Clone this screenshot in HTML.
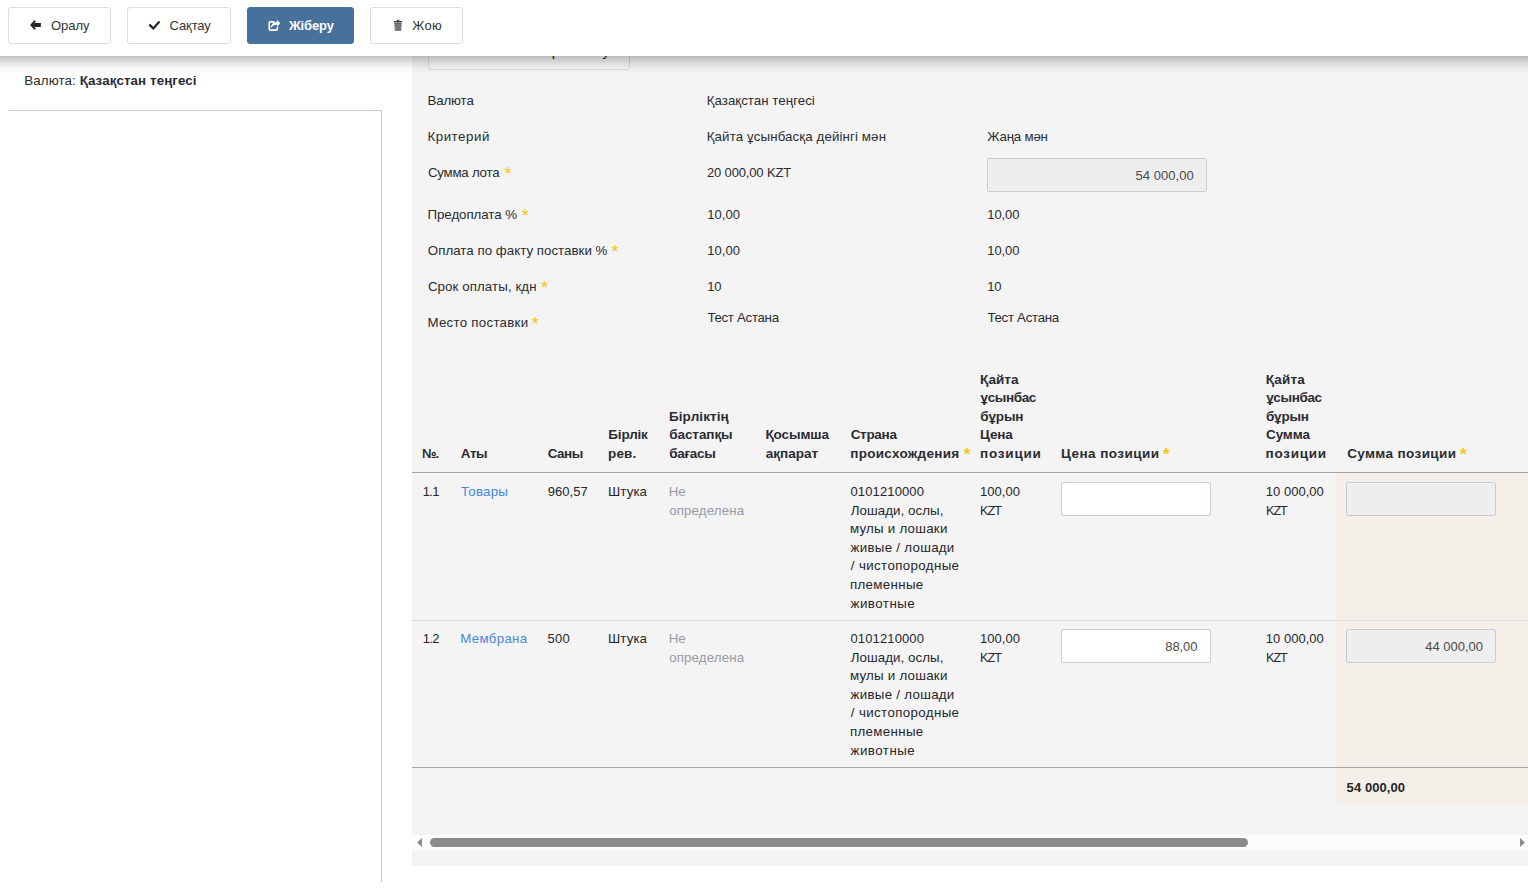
<!DOCTYPE html>
<html lang="kk">
<head>
<meta charset="utf-8">
<title>Қайта ұсынбас</title>
<style>
*{box-sizing:border-box;margin:0;padding:0}
html,body{width:1528px;height:895px;overflow:hidden;background:#fff}
body{font-family:"Liberation Sans","DejaVu Sans",sans-serif;font-size:13px;color:#2a2b33;position:relative}
.abs{position:absolute}
#panel{left:412px;top:0;width:1116px;height:866px;background:#f4f4f4}
#topbar{left:-40px;top:0;width:1608px;height:56px;background:#fff;box-shadow:0 4px 13px rgba(0,0,0,.33);z-index:10}
.btn{position:absolute;top:7px;height:37px;border:1px solid #dadce2;border-radius:3px;background:#fff;font-size:13px;line-height:35px;color:#333;white-space:nowrap}
.btn span{position:absolute;top:0}
.btn.primary{background:#47709b;border-color:#47709b;color:#fff;font-weight:bold}
.lbl,.th,.td{transform-origin:0 50%}
.lbl{position:absolute;white-space:nowrap;line-height:18px;font-size:13.3px}
.th{position:absolute;font-weight:bold;line-height:18.6px;white-space:nowrap;font-size:13.5px}
.td{position:absolute;line-height:18.6px;white-space:nowrap;color:#25262c;font-size:13.3px}
.b,.lbl b{font-weight:bold}
.a{color:#4a86e0}
.muted{color:#979aa5}
.inpt{color:#4a4a4a}
.star{position:absolute;color:#f9c50f;font-size:18px;line-height:18px}
.sb2{font-weight:bold;font-size:17px;margin-left:.5px}
.inp{position:absolute;border:1px solid #c8ccd8;border-radius:2px;background:#fff}
.inp.dis{background:#eee}
.line{position:absolute;left:412px;width:1116px}
</style>
</head>
<body>
<div id="panel" class="abs"></div>
<div class="abs box" style="left:8px;top:110px;width:374px;height:772px;border-top:1px solid #c9cdd9;border-right:1px solid #c9cdd9"></div>
<div class="abs box" style="left:428px;top:30px;width:202px;height:40px;border:1px solid #d9dbe0;border-radius:3px;background:#f6f6f6;color:#222;line-height:18px;white-space:nowrap"><span class="abs" style="left:76.7px;top:10.7px;letter-spacing:-.19px;font-size:14.5px">Excel прайс алу</span></div>
<div id="beige" class="abs" style="left:1336px;top:473px;width:192px;height:330px;background:#f4efe8"></div>
<div class="line" style="top:471.6px;height:1.9px;background:#a4a4a4"></div>
<div class="line" style="top:620px;height:1px;background:#dcdcdc"></div>
<div class="line" style="top:767px;height:1px;background:#a8a8a8"></div>
<div class="inp dis" style="left:987px;top:158px;width:220px;height:34px"></div>
<div class="inp" style="left:1061px;top:482px;width:150px;height:34px"></div>
<div class="inp dis" style="left:1346px;top:482px;width:150px;height:34px"></div>
<div class="inp" style="left:1061px;top:629px;width:150px;height:34px"></div>
<div class="inp dis" style="left:1346px;top:629px;width:150px;height:34px"></div>
<div id="t0" class="lbl" style="left:24.37px;top:72.0px;letter-spacing:0.114px">Валюта: <b>Қазақстан теңгесі</b></div>
<div id="t1" class="lbl" style="left:427.41px;top:92.0px;letter-spacing:-0.123px">Валюта</div>
<div id="t2" class="lbl" style="left:706.72px;top:92.0px;letter-spacing:0.033px">Қазақстан теңгесі</div>
<div id="t3" class="lbl" style="left:427.41px;top:128.0px;letter-spacing:0.541px">Критерий</div>
<div id="t4" class="lbl" style="left:706.72px;top:128.0px;letter-spacing:0.113px">Қайта ұсынбасқа дейінгі мән</div>
<div id="t5" class="lbl" style="left:987.35px;top:128.0px;letter-spacing:-0.220px">Жаңа мән</div>
<div id="t6" class="lbl" style="left:427.92px;top:164.0px;letter-spacing:-0.239px">Сумма лота</div>
<div class="star" style="left:504.3px;top:165.0px">*</div>
<div id="t7" class="lbl" style="left:706.92px;top:164.0px;letter-spacing:-0.143px;font-size:13px">20 000,00 KZT</div>
<div id="t8" class="lbl" style="left:427.47px;top:206.0px;letter-spacing:-0.049px">Предоплата %</div>
<div class="star" style="left:521.8px;top:207.0px">*</div>
<div id="t9" class="lbl" style="left:707.31px;top:206.0px;letter-spacing:0.016px;font-size:13px">10,00</div>
<div id="t10" class="lbl" style="left:987.31px;top:206.0px;letter-spacing:-0.109px;font-size:13px">10,00</div>
<div id="t11" class="lbl" style="left:427.86px;top:242.0px;letter-spacing:0.020px">Оплата по факту поставки %</div>
<div class="star" style="left:611.5px;top:243.0px">*</div>
<div id="t12" class="lbl" style="left:707.31px;top:242.0px;letter-spacing:0.016px;font-size:13px">10,00</div>
<div id="t13" class="lbl" style="left:987.31px;top:242.0px;letter-spacing:-0.109px;font-size:13px">10,00</div>
<div id="t14" class="lbl" style="left:427.92px;top:278.0px;letter-spacing:0.088px">Срок оплаты, кдн</div>
<div class="star" style="left:541.1px;top:279.0px">*</div>
<div id="t15" class="lbl" style="left:707.31px;top:278.0px;letter-spacing:-0.175px;font-size:13px">10</div>
<div id="t16" class="lbl" style="left:987.31px;top:278.0px;letter-spacing:-0.175px;font-size:13px">10</div>
<div id="t17" class="lbl" style="left:427.41px;top:314.0px;letter-spacing:0.272px">Место поставки</div>
<div class="star" style="left:531.8px;top:315.0px">*</div>
<div id="t18" class="lbl" style="left:707.42px;top:309.0px;letter-spacing:-0.318px">Тест Астана</div>
<div id="t19" class="lbl" style="left:987.42px;top:309.0px;letter-spacing:-0.303px">Тест Астана</div>
<div id="t20" class="th" style="left:421.98px;top:445.0px;letter-spacing:-0.970px;font-size:13px">№.</div>
<div id="t21" class="th" style="left:460.85px;top:445.0px;letter-spacing:-0.517px">Аты</div>
<div id="t22" class="th" style="left:547.71px;top:445.0px;letter-spacing:-0.505px">Саны</div>
<div id="t23" class="th" style="left:608.30px;top:426.4px;letter-spacing:-0.174px">Бірлік</div>
<div id="t24" class="th" style="left:608.09px;top:445.0px;letter-spacing:0.082px">рев.</div>
<div id="t25" class="th" style="left:668.95px;top:407.8px;letter-spacing:0.108px">Бірліктің</div>
<div id="t26" class="th" style="left:669.22px;top:426.4px;letter-spacing:-0.074px">бастапқы</div>
<div id="t27" class="th" style="left:669.22px;top:445.0px;letter-spacing:-0.285px">бағасы</div>
<div id="t28" class="th" style="left:765.46px;top:426.4px;letter-spacing:-0.098px">Қосымша</div>
<div id="t29" class="th" style="left:765.78px;top:445.0px;letter-spacing:-0.002px">ақпарат</div>
<div id="t30" class="th" style="left:850.68px;top:426.4px;letter-spacing:-0.311px">Страна</div>
<div id="t31" class="th" style="left:850.30px;top:445.0px;letter-spacing:0.280px">происхождения</div>
<div class="star sb2" style="left:963.2px;top:446.0px">*</div>
<div id="t32" class="th" style="left:980.12px;top:370.6px;letter-spacing:0.066px">Қайта</div>
<div id="t33" class="th" style="left:980.58px;top:389.2px;letter-spacing:-0.395px">ұсынбас</div>
<div id="t34" class="th" style="left:980.37px;top:407.8px;letter-spacing:-0.182px">бұрын</div>
<div id="t35" class="th" style="left:980.12px;top:426.4px;letter-spacing:-0.150px">Цена</div>
<div id="t36" class="th" style="left:980.01px;top:445.0px;letter-spacing:0.795px">позиции</div>
<div id="t37" class="th" style="left:1060.95px;top:445.0px;letter-spacing:0.459px">Цена позиции</div>
<div class="star sb2" style="left:1162.5px;top:446.0px">*</div>
<div id="t38" class="th" style="left:1265.66px;top:370.6px;letter-spacing:0.241px">Қайта</div>
<div id="t39" class="th" style="left:1266.17px;top:389.2px;letter-spacing:-0.347px">ұсынбас</div>
<div id="t40" class="th" style="left:1265.92px;top:407.8px;letter-spacing:-0.171px">бұрын</div>
<div id="t41" class="th" style="left:1266.04px;top:426.4px;letter-spacing:-0.121px">Сумма</div>
<div id="t42" class="th" style="left:1265.57px;top:445.0px;letter-spacing:0.747px">позиции</div>
<div id="t43" class="th" style="left:1347.18px;top:445.0px;letter-spacing:0.377px">Сумма позиции</div>
<div class="star sb2" style="left:1459.4px;top:446.0px">*</div>
<div id="t44" class="td" style="left:422.87px;top:483.0px;letter-spacing:-0.735px;font-size:13px">1.1</div>
<div id="t45" class="td a" style="left:460.98px;top:483.0px;letter-spacing:0.243px">Товары</div>
<div id="t46" class="td" style="left:547.65px;top:483.0px;letter-spacing:0.065px;font-size:13px">960,57</div>
<div id="t47" class="td" style="left:607.98px;top:483.0px;letter-spacing:0.116px">Штука</div>
<div id="t48" class="td muted" style="left:668.72px;top:483.0px;letter-spacing:-0.175px">Не</div>
<div id="t49" class="td muted" style="left:669.20px;top:501.6px;letter-spacing:0.128px">определена</div>
<div id="t50" class="td" style="left:850.49px;top:483.0px;letter-spacing:0.128px;font-size:13px">0101210000</div>
<div id="t51" class="td" style="left:850.75px;top:501.6px;letter-spacing:0.064px">Лошади, ослы,</div>
<div id="t52" class="td" style="left:849.98px;top:520.2px;letter-spacing:0.246px">мулы и лошаки</div>
<div id="t53" class="td" style="left:850.59px;top:538.8px;letter-spacing:0.287px">живые / лошади</div>
<div id="t54" class="td" style="left:850.85px;top:557.4px;letter-spacing:0.377px">/ чистопородные</div>
<div id="t55" class="td" style="left:849.98px;top:576.0px;letter-spacing:0.337px">племенные</div>
<div id="t56" class="td" style="left:850.59px;top:594.6px;letter-spacing:0.482px">животные</div>
<div id="t57" class="td" style="left:980.02px;top:483.0px;letter-spacing:0.045px;font-size:13px">100,00</div>
<div id="t58" class="td" style="left:980.04px;top:501.6px;letter-spacing:-0.957px;font-size:12.6px">KZT</div>
<div id="t59" class="td" style="left:1265.87px;top:483.0px;letter-spacing:0.002px;font-size:13px">10 000,00</div>
<div id="t60" class="td" style="left:1266.04px;top:501.6px;letter-spacing:-1.000px;font-size:12.6px">KZT</div>
<div id="t61" class="td" style="left:422.87px;top:630.0px;letter-spacing:-0.735px;font-size:13px">1.2</div>
<div id="t62" class="td a" style="left:460.29px;top:630.0px;letter-spacing:0.303px">Мембрана</div>
<div id="t63" class="td" style="left:547.57px;top:630.0px;letter-spacing:0.205px;font-size:13px">500</div>
<div id="t64" class="td" style="left:607.98px;top:630.0px;letter-spacing:0.116px">Штука</div>
<div id="t65" class="td muted" style="left:668.72px;top:630.0px;letter-spacing:-0.175px">Не</div>
<div id="t66" class="td muted" style="left:669.20px;top:648.6px;letter-spacing:0.128px">определена</div>
<div id="t67" class="td" style="left:850.49px;top:630.0px;letter-spacing:0.128px;font-size:13px">0101210000</div>
<div id="t68" class="td" style="left:850.75px;top:648.6px;letter-spacing:0.064px">Лошади, ослы,</div>
<div id="t69" class="td" style="left:849.98px;top:667.2px;letter-spacing:0.246px">мулы и лошаки</div>
<div id="t70" class="td" style="left:850.59px;top:685.8px;letter-spacing:0.287px">живые / лошади</div>
<div id="t71" class="td" style="left:850.85px;top:704.4px;letter-spacing:0.377px">/ чистопородные</div>
<div id="t72" class="td" style="left:849.98px;top:723.0px;letter-spacing:0.337px">племенные</div>
<div id="t73" class="td" style="left:850.59px;top:741.6px;letter-spacing:0.482px">животные</div>
<div id="t74" class="td" style="left:980.02px;top:630.0px;letter-spacing:0.045px;font-size:13px">100,00</div>
<div id="t75" class="td" style="left:980.04px;top:648.6px;letter-spacing:-0.957px;font-size:12.6px">KZT</div>
<div id="t76" class="td" style="left:1265.87px;top:630.0px;letter-spacing:0.002px;font-size:13px">10 000,00</div>
<div id="t77" class="td" style="left:1266.04px;top:648.6px;letter-spacing:-1.000px;font-size:12.6px">KZT</div>
<div id="t78" class="td inpt" style="left:1165.24px;top:638.0px;letter-spacing:-0.087px;font-size:13px">88,00</div>
<div id="t79" class="td inpt" style="left:1425.16px;top:638.0px;letter-spacing:-0.002px;font-size:13px">44 000,00</div>
<div id="t80" class="td inpt" style="left:1135.40px;top:167.0px;letter-spacing:0.070px;font-size:13px">54 000,00</div>
<div id="t81" class="td b" style="left:1346.62px;top:779.0px;letter-spacing:0.079px;font-size:13px">54 000,00</div>
<!-- scrollbar -->
<div class="abs sb" style="left:412px;top:835px;width:1116px;height:15px;background:#fcfcfc"></div>
<div class="abs sb" style="left:430px;top:838px;width:818px;height:9px;border-radius:5px;background:#8b8b8b"></div>
<svg class="abs sb" style="left:417px;top:838px" width="5" height="9" viewBox="0 0 5 9"><path d="M5 0L0 4.500l5 4.500z" fill="#8b8b8b"/></svg>
<svg class="abs sb" style="left:1520px;top:838px" width="5" height="9" viewBox="0 0 5 9"><path d="M0 0l5 4.500-5 4.500z" fill="#8b8b8b"/></svg>

<!-- top bar -->
<div id="topbar" class="abs">
  <div class="btn" style="left:48px;width:103px"><span style="left:42px;letter-spacing:-.05px">Оралу</span></div>
  <div class="btn" style="left:167px;width:104px"><span style="left:41.5px;letter-spacing:-.1px">Сақтау</span></div>
  <div class="btn primary" style="left:287px;width:107px"><span style="left:41px;letter-spacing:-.15px">Жіберу</span></div>
  <div class="btn" style="left:410px;width:93px"><span style="left:41.3px;letter-spacing:.35px">Жою</span></div>
  <svg class="abs" style="left:40px;top:0" width="480" height="56" viewBox="0 0 480 56">
    <path d="M30.1 25L34.6 20.1l1.3 1.3-1.7 1.7h6.7v3.8h-6.7l1.7 1.7-1.3 1.3z" fill="#262626"/>
    <path d="M148.500 25.500L150.200 23.800L153.300 26.800L158.700 20.700L160.300 22.300L153.400 29.900Z" fill="#262626"/>
    <path d="M274.4 21.9h-4.2a1 1 0 0 0-1 1v6.2a1 1 0 0 0 1 1h6.2a1 1 0 0 0 1-1v-2.2" fill="none" stroke="#fff" stroke-width="1.6"/>
    <path d="M277 19.7l3.3 3.6-3.3 3.6v-2.1c-2.6 0-4.600.9-6.4 3.800.2-3.500 2.200-6.600 6.400-6.800z" fill="#fff"/>
    <path d="M396.800 20.900c0-.800.500-1.200 1.300-1.200s1.300.400 1.300 1.200h2.100c.300 0 .400.100.400.400v.900h-7.900v-.900c0-.300.100-.400.400-.400z" fill="#3f3f3f"/>
    <path d="M394.300 22.600h7.400l-.500 7.300c0 .600-.400.900-1 .900h-4.400c-.600 0-1-.300-1-.900z" fill="#5a5a5a"/>
    <path d="M395.900 23.600v6.200M397.950 23.600v6.200M400 23.600v6.200" stroke="#b5b5b5" stroke-width=".7"/>
  </svg>
</div>
</body>
</html>
